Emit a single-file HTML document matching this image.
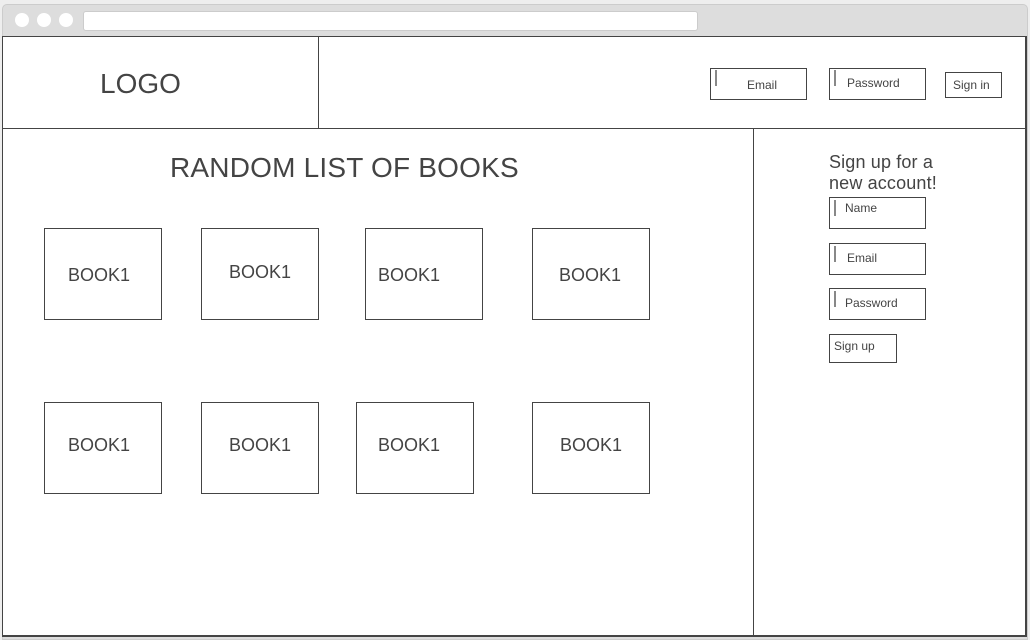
<!DOCTYPE html>
<html><head><meta charset="utf-8"><style>
*{margin:0;padding:0;box-sizing:border-box}
html,body{width:1030px;height:640px;overflow:hidden;background:#eee;font-family:"Liberation Sans",sans-serif;color:#444}
.a{position:absolute}
.b{position:absolute;border:1px solid #444;background:#fff}
.t{position:absolute;white-space:nowrap;line-height:1}
.c{position:absolute;width:2px;height:16px;background:#888}
</style></head><body>
<div class="a" style="left:2px;top:4px;width:1026px;height:636px;background:#ddd;border:1px solid #ccc;border-radius:5px 5px 0 0"></div>
<div class="a" style="left:15px;top:13px;width:14px;height:14px;border-radius:50%;background:#fff"></div>
<div class="a" style="left:37px;top:13px;width:14px;height:14px;border-radius:50%;background:#fff"></div>
<div class="a" style="left:59px;top:13px;width:14px;height:14px;border-radius:50%;background:#fff"></div>
<div class="a" style="left:83px;top:11px;width:615px;height:20px;background:#fff;border:1px solid #ccc;border-radius:3px"></div>
<div class="a" style="left:2px;top:36px;width:1025px;height:601px;background:#fff;border:1px solid #444;border-width:1px 2px 2px 1px"></div>
<div class="a" style="left:2px;top:128px;width:1024px;height:1px;background:#444"></div>
<div class="a" style="left:318px;top:36px;width:1px;height:92px;background:#444"></div>
<div class="a" style="left:753px;top:128px;width:1px;height:508px;background:#444"></div>

<div class="t" style="left:100px;top:70px;font-size:28px">LOGO</div>

<div class="b" style="left:710px;top:68px;width:97px;height:32px"></div><div class="c" style="left:715px;top:70px"></div>
<div class="t" style="left:747px;top:79px;font-size:12px">Email</div>
<div class="b" style="left:829px;top:68px;width:97px;height:32px"></div><div class="c" style="left:834px;top:70px"></div>
<div class="t" style="left:847px;top:77px;font-size:12px">Password</div>
<div class="b" style="left:945px;top:72px;width:57px;height:26px"></div>
<div class="t" style="left:953px;top:79px;font-size:12px">Sign in</div>

<div class="t" style="left:170px;top:154px;font-size:28px;letter-spacing:0.2px">RANDOM LIST OF BOOKS</div>

<div class="b" style="left:44px;top:228px;width:118px;height:92px"></div>
<div class="b" style="left:201px;top:228px;width:118px;height:92px"></div>
<div class="b" style="left:365px;top:228px;width:118px;height:92px"></div>
<div class="b" style="left:532px;top:228px;width:118px;height:92px"></div>
<div class="b" style="left:44px;top:402px;width:118px;height:92px"></div>
<div class="b" style="left:201px;top:402px;width:118px;height:92px"></div>
<div class="b" style="left:356px;top:402px;width:118px;height:92px"></div>
<div class="b" style="left:532px;top:402px;width:118px;height:92px"></div>
<div class="t" style="left:68px;top:266px;font-size:18px">BOOK1</div>
<div class="t" style="left:229px;top:263px;font-size:18px">BOOK1</div>
<div class="t" style="left:378px;top:266px;font-size:18px">BOOK1</div>
<div class="t" style="left:559px;top:266px;font-size:18px">BOOK1</div>
<div class="t" style="left:68px;top:436px;font-size:18px">BOOK1</div>
<div class="t" style="left:229px;top:436px;font-size:18px">BOOK1</div>
<div class="t" style="left:378px;top:436px;font-size:18px">BOOK1</div>
<div class="t" style="left:560px;top:436px;font-size:18px">BOOK1</div>

<div class="t" style="left:829px;top:152px;font-size:18px;line-height:21px;letter-spacing:0.15px">Sign up for a<br>new account!</div>
<div class="b" style="left:829px;top:197px;width:97px;height:32px"></div><div class="c" style="left:834px;top:200px"></div>
<div class="t" style="left:845px;top:202px;font-size:12px">Name</div>
<div class="b" style="left:829px;top:243px;width:97px;height:32px"></div><div class="c" style="left:834px;top:246px"></div>
<div class="t" style="left:847px;top:252px;font-size:12px">Email</div>
<div class="b" style="left:829px;top:288px;width:97px;height:32px"></div><div class="c" style="left:834px;top:291px"></div>
<div class="t" style="left:845px;top:297px;font-size:12px">Password</div>
<div class="b" style="left:829px;top:334px;width:68px;height:29px"></div>
<div class="t" style="left:834px;top:340px;font-size:12px">Sign up</div>
</body></html>
